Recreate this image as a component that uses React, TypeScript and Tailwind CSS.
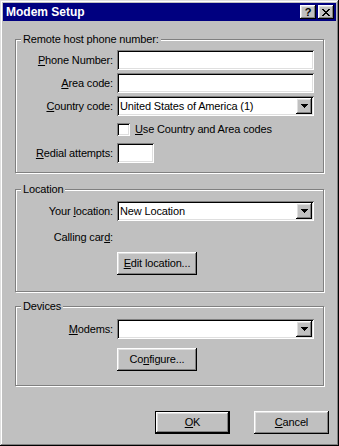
import React from "react";

const raised =
  "shadow-[inset_-1px_-1px_#000,inset_1px_1px_#fff,inset_-2px_-2px_#808080,inset_2px_2px_#dfdfdf]";
const sunken =
  "shadow-[inset_1px_1px_#808080,inset_-1px_-1px_#fff,inset_2px_2px_#000,inset_-2px_-2px_#dfdfdf]";

function Arrow() {
  return (
    <svg width="7" height="4" viewBox="0 0 7 4" shapeRendering="crispEdges">
      <rect x="0" y="0" width="7" height="1" fill="#000" />
      <rect x="1" y="1" width="5" height="1" fill="#000" />
      <rect x="2" y="2" width="3" height="1" fill="#000" />
      <rect x="3" y="3" width="1" height="1" fill="#000" />
    </svg>
  );
}

function CloseGlyph() {
  const rows = [
    [0, 1, 6, 7],
    [1, 2, 5, 6],
    [2, 3, 4, 5],
    [3, 4],
    [2, 3, 4, 5],
    [1, 2, 5, 6],
    [0, 1, 6, 7],
  ];
  return (
    <svg width="8" height="7" viewBox="0 0 8 7" shapeRendering="crispEdges">
      {rows.map((cols, y) =>
        cols.map((x) => <rect key={`${x}-${y}`} x={x} y={y} width="1" height="1" fill="#000" />)
      )}
    </svg>
  );
}

function Label({ children }: { children: React.ReactNode }) {
  return <div className="w-[97px] shrink-0 text-right leading-[13px]">{children}</div>;
}

function Edit({ w = "w-[197px]" }: { w?: string }) {
  return <div className={`ml-[4px] h-[20px] bg-white ${w} ${sunken}`} />;
}

function Combo({ text }: { text: string }) {
  return (
    <div className={`ml-[4px] flex h-[20px] w-[197px] items-center bg-white pl-[3px] pr-[2px] ${sunken}`}>
      <span className="flex-1 leading-[13px]">{text}</span>
      <div className={`flex h-[16px] w-[16px] items-center justify-center bg-[#c0c0c0] ${raised}`}>
        <Arrow />
      </div>
    </div>
  );
}

function Button({ children, def = false, w = "w-[75px]" }: { children: React.ReactNode; def?: boolean; w?: string }) {
  return (
    <div
      className={`flex h-[23px] items-center justify-center bg-[#c0c0c0] leading-[13px] ${w} ${raised} ${
        def ? "border border-black" : ""
      }`}
    >
      {children}
    </div>
  );
}

function Group({
  title,
  className,
  children,
}: {
  title: string;
  className: string;
  children: React.ReactNode;
}) {
  return (
    <div
      className={`relative mx-[12px] border border-[#808080] shadow-[1px_1px_0_#fff,inset_1px_1px_0_#fff] ${className}`}
    >
      <span className="absolute -top-[7px] left-[5px] bg-[#c0c0c0] px-[2px] leading-[13px]">{title}</span>
      {children}
    </div>
  );
}

export default function App() {
  return (
    <div
      className={`flex h-[446px] w-[339px] flex-col bg-[#c0c0c0] p-[3px] text-[11px] tracking-[-0.15px] text-black shadow-[inset_-1px_-1px_#000,inset_1px_1px_#dfdfdf,inset_-2px_-2px_#808080,inset_2px_2px_#fff]`}
      style={{ fontFamily: '"Liberation Sans", Arial, sans-serif' }}
    >
      <div className="flex h-[18px] items-center bg-[#000080] pl-[3px] pr-[2px]">
        <span className="text-[12px] font-bold leading-[14px] tracking-normal text-white">Modem Setup</span>
        <div className="ml-auto flex">
          <div className={`flex h-[14px] w-[16px] items-center justify-center bg-[#c0c0c0] ${raised}`}>
            <span className="text-[11px] font-bold leading-[11px]">?</span>
          </div>
          <div className={`ml-[2px] flex h-[14px] w-[16px] items-center justify-center bg-[#c0c0c0] ${raised}`}>
            <CloseGlyph />
          </div>
        </div>
      </div>

      <Group title="Remote host phone number:" className="mt-[18px] pt-[10px] pb-[9px]">
        <div className="flex h-[20px] items-center">
          <Label>
            <u>P</u>hone Number:
          </Label>
          <Edit />
        </div>
        <div className="mt-[3px] flex h-[20px] items-center">
          <Label>
            <u>A</u>rea code:
          </Label>
          <Edit />
        </div>
        <div className="mt-[3px] flex h-[20px] items-center">
          <Label>
            <u>C</u>ountry code:
          </Label>
          <Combo text="United States of America (1)" />
        </div>
        <div className="mt-[7px] flex h-[13px] items-center">
          <div className={`ml-[101px] h-[13px] w-[13px] bg-white ${sunken}`} />
          <span className="ml-[5px] leading-[13px]">
            <u>U</u>se Country and Area codes
          </span>
        </div>
        <div className="mt-[7px] flex h-[20px] items-center">
          <Label>
            <u>R</u>edial attempts:
          </Label>
          <Edit w="w-[37px]" />
        </div>
      </Group>

      <Group title="Location" className="mt-[16px] pt-[11px] pb-[16px]">
        <div className="flex h-[20px] items-center">
          <Label>
            Your <u>l</u>ocation:
          </Label>
          <Combo text="New Location" />
        </div>
        <div className="mt-[6px] flex h-[20px] items-center">
          <Label>
            Calling car<u>d</u>:
          </Label>
        </div>
        <div className="mt-[5px] flex pl-[101px]">
          <Button w="w-[80px]">
            <u>E</u>dit location...
          </Button>
        </div>
      </Group>

      <Group title="Devices" className="mt-[14px] pt-[12px] pb-[14px]">
        <div className="flex h-[20px] items-center">
          <Label>
            <u>M</u>odems:
          </Label>
          <Combo text="" />
        </div>
        <div className="mt-[9px] flex pl-[101px]">
          <Button w="w-[80px]">
            Co<u>n</u>figure...
          </Button>
        </div>
      </Group>

      <div className="mt-[25px] flex justify-end gap-[24px] pr-[7px]">
        <Button def>
          <u>O</u>K
        </Button>
        <Button>
          <u>C</u>ancel
        </Button>
      </div>
    </div>
  );
}
